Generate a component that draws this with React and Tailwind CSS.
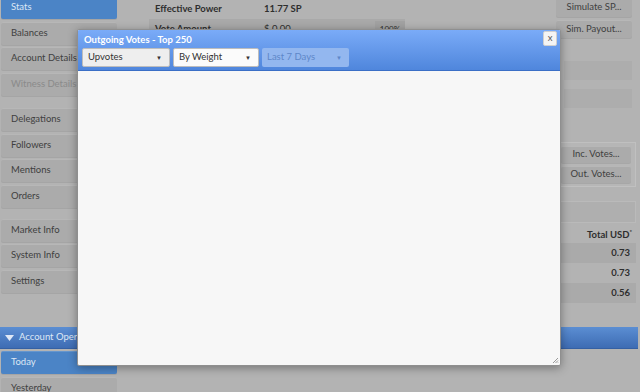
import React from "react";

const font = { fontFamily: 'Lato, "Open Sans", sans-serif' };

function SideBtn({ label, active, disabled }) {
  return (
    <div
      className={
        "h-[23px] rounded-[2px] flex items-center pl-[10px] text-[9.5px] shadow-[inset_0_1px_0_rgba(255,255,255,0.15),0_1px_0_rgba(0,0,0,0.08)] " +
        (active
          ? "bg-[#4b84c6] text-[#dde7f4]"
          : disabled
          ? "bg-[#ababab] text-[#8a8a8a]"
          : "bg-[#ababab] text-[#404040]")
      }
    >
      {label}
    </div>
  );
}

function Select({ label, className, textClass, caretClass }) {
  return (
    <div
      className={
        "h-[19px] flex items-center justify-between pl-[5px] pr-[7px] rounded-[2px] text-[9.5px] " +
        className
      }
    >
      <span className={textClass}>{label}</span>
      <span className={"text-[6px] " + caretClass}>▼</span>
    </div>
  );
}

const btn =
  "bg-[#ababab] rounded-[2px] text-[9.5px] text-[#404040] flex items-center justify-center shadow-[inset_0_1px_0_rgba(255,255,255,0.15),0_1px_0_rgba(0,0,0,0.08)]";

export default function App() {
  return (
    <div
      className="relative w-[640px] h-[392px] overflow-hidden bg-[#b3b3b3] text-[#333]"
      style={font}
    >
      <div className="flex h-full">
        {/* Sidebar */}
        <div className="w-[118px] flex flex-col pl-[1px] pr-[1px] -mt-[4px]">
          <div className="flex flex-col gap-[2.5px]">
            <SideBtn label="Stats" active />
            <SideBtn label="Balances" />
            <SideBtn label="Account Details" />
            <SideBtn label="Witness Details" disabled />
          </div>
          <div className="flex flex-col gap-[2.5px] mt-[12.5px]">
            <SideBtn label="Delegations" />
            <SideBtn label="Followers" />
            <SideBtn label="Mentions" />
            <SideBtn label="Orders" />
          </div>
          <div className="flex flex-col gap-[2.5px] mt-[11px]">
            <SideBtn label="Market Info" />
            <SideBtn label="System Info" />
            <SideBtn label="Settings" />
          </div>
        </div>

        {/* Main */}
        <div className="flex-1 flex flex-col">
          <div className="flex">
            <div className="flex-1 pl-[37px]">
              <div className="h-[19px] flex items-center text-[9.5px] font-bold text-[#2e2e2e]">
                <span className="w-[109px]">Effective Power</span>
                <span>11.77 SP</span>
              </div>
              <div className="h-[20px] bg-[#a9a9a9] flex items-center text-[9.5px] font-bold text-[#2e2e2e] -ml-[6px] pl-[6px] mr-[151px]">
                <span className="w-[109px] shrink-0">Vote Amount</span>
                <span className="font-normal w-[32px] shrink-0 whitespace-nowrap">$ 0.00</span>
                <span className="flex-1 border-b border-dotted border-[#999] mx-[4px]"></span>
                <span className="w-[30px] h-[16px] bg-[#a2a2a2] text-[8px] font-normal flex items-center justify-center">100%</span>
              </div>
            </div>
            <div className="w-[84px] flex flex-col items-end gap-[3px] pr-[8px] -mt-[2px]">
              <div className={"w-[76px] h-[19px] " + btn}>Simulate SP...</div>
              <div className={"w-[76px] h-[18px] " + btn}>Sim. Payout...</div>
            </div>
          </div>
          <div className="flex flex-col items-end pr-[8px] gap-[9px] mt-[22px]">
            <div className="w-[68px] h-[19px] bg-[#adadad]"></div>
            <div className="w-[68px] h-[19px] bg-[#adadad]"></div>
          </div>
          <div className="flex flex-col items-end pr-[4px] mt-[34px]">
            <div className="w-[80px] py-[3px] pr-[4px] bg-[#b6b6b6] border border-[#c0c0c0] flex flex-col items-end gap-[3px]">
              <div className={"w-[70px] h-[17px] " + btn}>Inc. Votes...</div>
              <div className={"w-[70px] h-[17px] " + btn}>Out. Votes...</div>
            </div>
          </div>
          <div className="flex justify-end pr-[4px] mt-[14px]">
            <div className="w-[90px] h-[22px] bg-[#afafaf] border border-[#bababa]"></div>
          </div>
          <div className="flex flex-col items-end pr-[4px] mt-[4px] text-[9.5px] text-[#2e2e2e]">
            <div className="h-[16px] w-[90px] flex items-center justify-end pr-[4px] font-bold">
              Total USD<sup className="text-[6px]">*</sup>
            </div>
            <div className="h-[20px] w-[90px] bg-[#aaaaaa] flex items-center justify-end pr-[6px] font-bold">0.73</div>
            <div className="h-[20px] w-[90px] flex items-center justify-end pr-[6px] font-bold">0.73</div>
            <div className="h-[20px] w-[90px] bg-[#aaaaaa] flex items-center justify-end pr-[6px] font-bold">0.56</div>
          </div>
        </div>
      </div>

      {/* Account Operations section (bottom) */}
      <div className="absolute left-0 right-[2px] top-[327px] flex flex-col">
        <div className="h-[22px] bg-gradient-to-b from-[#5b8ed3] to-[#3e6cb3] flex items-center pl-[5px] gap-[5px] text-[9.5px] text-[#dfe8f6] border-b border-[#3560a3]">
          <svg width="9" height="6" viewBox="0 0 9 6">
            <path d="M0 0 L9 0 L4.5 6 Z" fill="#dfe8f6" />
          </svg>
          <span>Account Operations</span>
        </div>
        <div className="w-[117px] flex flex-col gap-[3px] mt-[2px] pl-[1px]">
          <SideBtn label="Today" active />
          <SideBtn label="Yesterday" />
        </div>
      </div>

      {/* Modal */}
      <div className="absolute left-[77px] top-[29px] w-[484px] h-[337px] bg-[#f7f7f7] border border-[#8f8f8f] rounded-[2px] shadow-[0_2px_10px_rgba(0,0,0,0.35)] flex flex-col">
        <div className="h-[41px] bg-gradient-to-b from-[#7aabf8] to-[#4f86dc] border-b border-[#3b6fc6] rounded-t-[1px] flex flex-col px-[4px] pt-[2px]">
          <div className="flex items-start justify-between">
            <span className="text-[9.5px] font-bold text-white pl-[2px] pt-[1px] leading-[14px]">Outgoing Votes - Top 250</span>
            <div className="w-[14px] h-[15px] bg-[#f4f4f4] border border-[#d0d0d0] rounded-[2px] text-[9.5px] text-[#555] flex items-center justify-center -mt-[1px] mr-[-1px]">
              x
            </div>
          </div>
          <div className="flex gap-[3px] mt-[1px]">
            <Select label="Upvotes" className="w-[88px] bg-[#eeeeee] border border-[#bdbdbd]" textClass="text-[#333]" caretClass="text-[#333]" />
            <Select label="By Weight" className="w-[86px] bg-[#fbfbfb] border border-[#bdbdbd]" textClass="text-[#333]" caretClass="text-[#333]" />
            <Select label="Last 7 Days" className="w-[87px] bg-[#93b7ef]" textClass="text-[#5e87c9]" caretClass="text-[#5e87c9]" />
          </div>
        </div>
        <div className="flex-1 relative">
          <svg className="absolute right-[1px] bottom-[1px]" width="7" height="7" viewBox="0 0 7 7">
            <path d="M6 1 L1 6 M6 3.5 L3.5 6 M6 5.5 L5.5 6" stroke="#999" strokeWidth="1" />
          </svg>
        </div>
      </div>
    </div>
  );
}
